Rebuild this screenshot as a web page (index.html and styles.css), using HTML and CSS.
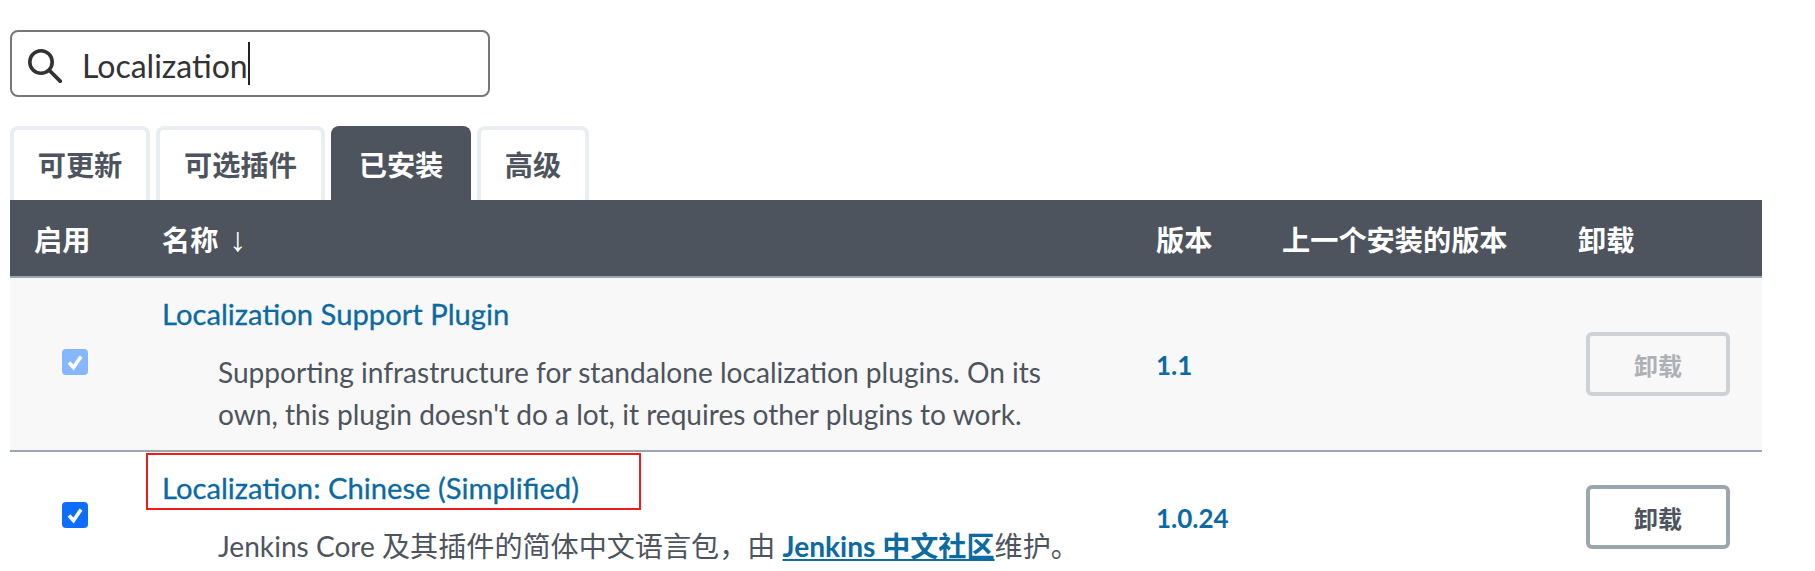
FILE: index.html
```html
<!DOCTYPE html>
<html lang="zh-CN">
<head>
    <meta charset="UTF-8">
    <title>插件管理</title>
    <link rel="stylesheet" href="styles.css">
</head>
<body>
    <div class="page">
        <div class="search-box">
            <svg class="search-icon" viewBox="0 0 34 34" width="34" height="34">
                <circle cx="13" cy="13" r="11.2" fill="none" stroke="#333" stroke-width="3.6"/>
                <path d="M21 21 L33.5 33.5" stroke="#333" stroke-width="3.8" fill="none"/>
            </svg>
            <span class="search-text">Localization</span><span class="caret"></span>
        </div>

        <div class="tabs">
            <div class="tab tab-1">可更新</div>
            <div class="tab tab-2">可选插件</div>
            <div class="tab tab-3 active">已安装</div>
            <div class="tab tab-4">高级</div>
        </div>

        <table class="plugins">
            <colgroup>
                <col class="col-enable">
                <col class="col-name">
                <col class="col-version">
                <col class="col-previous">
                <col class="col-remove">
            </colgroup>
            <thead>
                <tr>
                    <th>启用</th>
                    <th>名称 <span class="sort-arrow">↓</span></th>
                    <th>版本</th>
                    <th>上一个安装的版本</th>
                    <th>卸载</th>
                </tr>
            </thead>
            <tbody>
                <tr class="row-odd">
                    <td class="cell-check"><span class="check check-disabled"><svg viewBox="0 0 26 26" width="26" height="26"><path d="M7 13.5 L11.5 18.5 L19 7.5" fill="none" stroke="#fff" stroke-width="3.6"/></svg></span></td>
                    <td class="cell-name">
                        <a class="plugin-name" href="#">Localization Support Plugin</a>
                        <div class="plugin-desc">Supporting infrastructure for standalone localization plugins. On its own, this plugin doesn't do a lot, it requires other plugins to work.</div>
                    </td>
                    <td><a class="version" href="#">1.1</a></td>
                    <td></td>
                    <td class="cell-remove"><button class="btn-remove" disabled>卸载</button></td>
                </tr>
                <tr>
                    <td class="cell-check"><span class="check"><svg viewBox="0 0 26 26" width="26" height="26"><path d="M7 13.5 L11.5 18.5 L19 7.5" fill="none" stroke="#fff" stroke-width="3.6"/></svg></span></td>
                    <td class="cell-name">
                        <a class="plugin-name" href="#">Localization: Chinese (Simplified)</a>
                        <div class="plugin-desc">Jenkins Core 及其插件的简体中文语言包，由 <a class="desc-link" href="#">Jenkins 中文社区</a>维护。</div>
                    </td>
                    <td><a class="version" href="#">1.0.24</a></td>
                    <td></td>
                    <td class="cell-remove"><button class="btn-remove">卸载</button></td>
                </tr>
            </tbody>
        </table>

        <div class="red-mark"></div>
    </div>
</body>
</html>
```

FILE: styles.css
```css
html, body {
    margin: 0;
    padding: 0;
    height: 571px;
    overflow: hidden;
    background: #fff;
}
body {
    font-family: Lato, "Noto Sans CJK SC", sans-serif;
    font-size: 28px;
    color: #4d545d;
}
.page {
    position: relative;
    padding: 30px 0 0 10px;
    width: 1752px;
}
.search-box {
    box-sizing: border-box;
    width: 480px;
    height: 67px;
    border: 2px solid #777;
    border-radius: 8px;
    display: flex;
    align-items: center;
    padding-left: 16px;
}
.search-icon {
    flex: none;
    margin: 4px 20px 0 0;
}
.search-text {
    padding-top: 4px;
    font-size: 32px;
    color: #333;
}
.caret {
    width: 2px;
    height: 43px;
    background: #222;
}
.tabs {
    display: flex;
    gap: 6px;
    margin-top: 29px;
    height: 74px;
}
.tab {
    box-sizing: border-box;
    border: 4px solid #e9eef2;
    border-bottom: none;
    border-radius: 8px 8px 0 0;
    padding-bottom: 3px;
    font-size: 28.2px;
    font-weight: 700;
    display: flex;
    align-items: center;
    justify-content: center;
}
.tab-1 { width: 140px; }
.tab-2 { width: 169px; }
.tab-3 { width: 140px; }
.tab-4 { width: 112px; }
.tab.active {
    background: #4d545d;
    border-color: #4d545d;
    color: #fff;
}
.plugins {
    width: 1752px;
    table-layout: fixed;
    border-collapse: collapse;
}
.col-enable { width: 128px; }
.col-version { width: 126px; }
.col-previous { width: 296px; }
.col-remove { width: 208px; }
.plugins th {
    background: #4d545d;
    color: #fff;
    font-size: 28.2px;
    font-weight: 700;
    text-align: left;
    height: 76px;
    padding: 0 0 0 24px;
    border-bottom: 2px solid #9ba7af;
    white-space: nowrap;
}
.sort-arrow {
    font-family: "Liberation Sans", sans-serif;
    font-size: 34px;
    line-height: 0;
    font-weight: 400;
    margin-left: 4px;
}
.plugins td {
    padding: 0 0 0 24px;
    vertical-align: middle;
    border-bottom: 2px solid #9ba7af;
}
.row-odd td {
    background: #f8f8f8;
}
.plugins .cell-check {
    padding: 0 0 4px 2px;
}
.check {
    display: block;
    width: 26px;
    height: 26px;
    margin: 0 auto;
    border-radius: 4px;
    background: #0d6efd;
}
.check svg {
    display: block;
}
.check-disabled {
    background: #86b7fe;
}
.plugins .cell-name {
    padding: 16px 40px 15px 24px;
}
.plugin-name {
    display: block;
    color: #0b6aa2;
    font-size: 29.2px;
    -webkit-text-stroke: 0.3px #0b6aa2;
    text-decoration: none;
    line-height: 40px;
}
.plugin-desc {
    margin: 17px 0 0 56px;
    font-size: 28.1px;
    line-height: 42px;
    color: #4d545d;
}
.desc-link {
    color: #0b6aa2;
    font-weight: 700;
}
.version {
    color: #0b6aa2;
    font-size: 26px;
    font-weight: 700;
    text-decoration: none;
}
.plugins .cell-remove {
    padding: 0;
    text-align: center;
}
.btn-remove {
    box-sizing: border-box;
    width: 144px;
    height: 64px;
    border: 4px solid #9ba7af;
    border-radius: 6px;
    background: #fff;
    color: #4d545d;
    font: 700 24px Lato, "Noto Sans CJK SC", sans-serif;
}
.btn-remove:disabled {
    border-color: #cdd2d6;
    background: #f8f8f8;
    color: #adb1b5;
}
.red-mark {
    position: absolute;
    left: 146px;
    top: 453px;
    width: 495px;
    height: 57px;
    box-sizing: border-box;
    border: 2px solid #f01c1c;
}
```
